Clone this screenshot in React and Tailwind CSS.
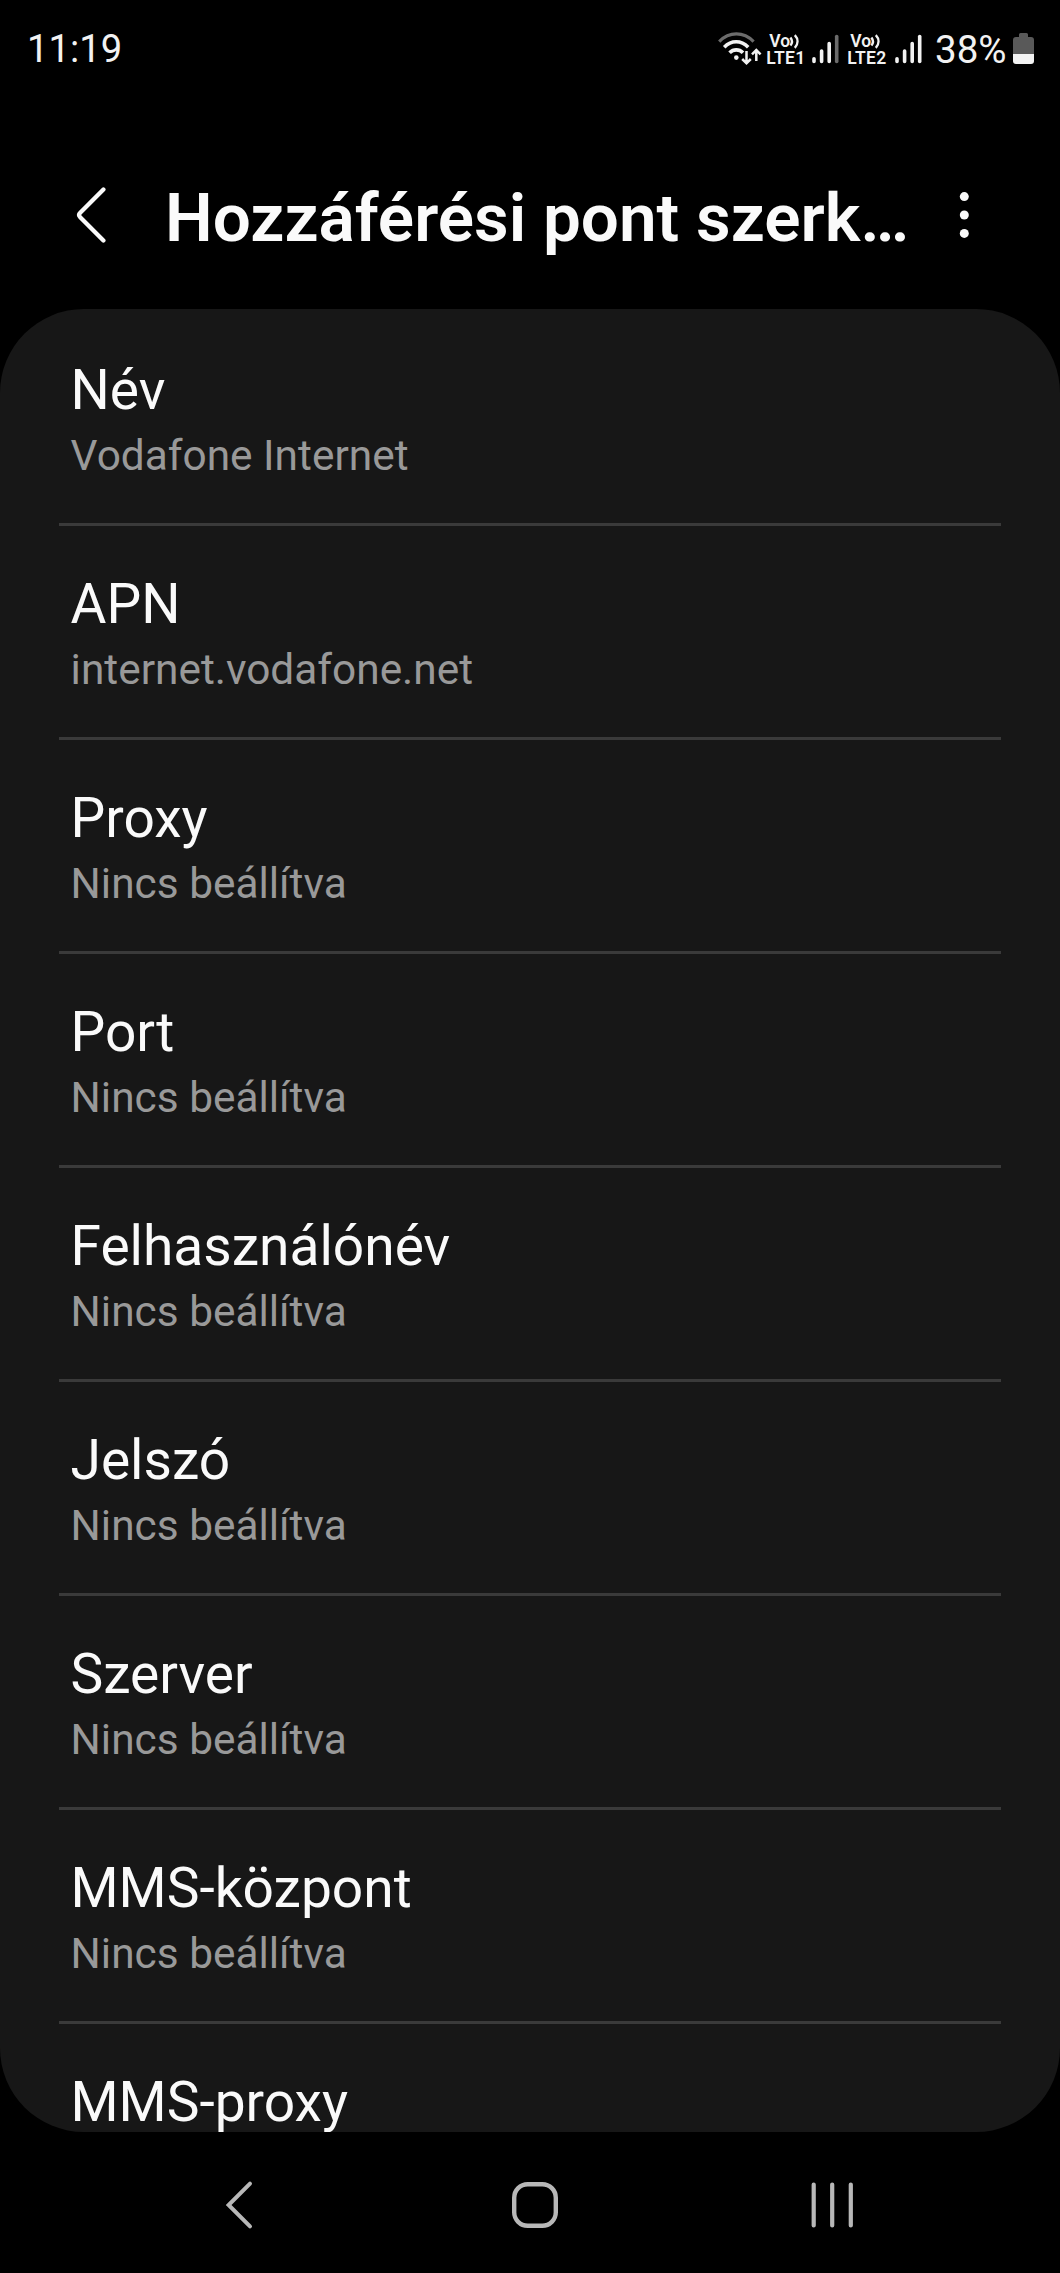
const UNSET = "Nincs beállítva";

const ITEMS = [
  { title: "Név", value: "Vodafone Internet" },
  { title: "APN", value: "internet.vodafone.net" },
  { title: "Proxy", value: UNSET },
  { title: "Port", value: UNSET },
  { title: "Felhasználónév", value: UNSET },
  { title: "Jelszó", value: UNSET },
  { title: "Szerver", value: UNSET },
  { title: "MMS-központ", value: UNSET },
  { title: "MMS-proxy" },
];

function WifiIcon() {
  return (
    <svg className="-mt-[2px] h-[34px] w-[44px]" viewBox="0 0 44 34" fill="none" strokeLinecap="butt">
      <path d="M1.2 9.6C11.3 -.6 25.5 -.6 35.6 9.6" stroke="#6b6b6b" strokeWidth="3.2" />
      <path d="M6.2 15.2C13.4 8 23 8 30.2 15.2" stroke="#f2f2f2" strokeWidth="3.6" />
      <path d="M11.6 20.8C15.4 16.9 21.2 16.9 25 20.8" stroke="#f2f2f2" strokeWidth="3.6" />
      <circle cx="18.3" cy="25.6" r="2.3" fill="#f2f2f2" />
      <path d="M28.5 19v12M24.2 27l4.3 4.3 4.3-4.3M38.3 29V18.3M34 22.4l4.3-4.3 4.3 4.3" stroke="#f2f2f2" strokeWidth="2.5" />
    </svg>
  );
}

function VolteBadge({ sim }) {
  return (
    <div className="flex h-[34px] w-[40px] flex-col text-[17.5px] font-semibold leading-[17px]">
      <div className="flex pl-[3px]">
        <span>Vo</span>
        <svg className="-ml-px h-[17px] w-[12px]" viewBox="0 0 12 17" fill="none" stroke="#f2f2f2" strokeWidth="2.4">
          <path d="M1.4 4.4c2 2.6 2 5.6 0 8.2M5.8 2.2c3.6 3.8 3.6 8.8 0 12.6" />
        </svg>
      </div>
      <span className="tracking-[0.3px]">LTE{sim}</span>
    </div>
  );
}

function SignalIcon({ weak }) {
  return (
    <svg className="-mt-[2px] h-[30px] w-[27px]" viewBox="0 0 27 30" stroke="#f2f2f2" strokeWidth="3.6" strokeLinecap="round">
      <path d="M2 24.8v2.6M9.6 17v10.4M17.2 9.6v17.8" />
      <path d="M24.7 2.6v24.8" stroke={weak ? "#6b6b6b" : "#f2f2f2"} />
    </svg>
  );
}

function BatteryIcon() {
  return (
    <svg className="h-[31px] w-[21px]" viewBox="0 0 21 31">
      <path d="M6 1.5Q6 0 7.5 0h6Q15 0 15 1.5V4h3q3 0 3 3v14H0V7q0-3 3-3h3z" fill="#595959" />
      <path d="M0 21h21v7q0 3-3 3H3q-3 0-3-3z" fill="#f2f2f2" />
    </svg>
  );
}

function StatusBar() {
  return (
    <div className="flex h-[97px] items-center justify-between pl-[27px] pr-[26px] text-[38.5px] leading-[46px] text-[#f2f2f2]">
      <span className="text-[38.2px]">11:19</span>
      <div className="flex items-center">
        <div className="mt-[2px] flex items-center">
          <WifiIcon />
          <div className="ml-[4.5px]"><VolteBadge sim="1" /></div>
          <div className="ml-[6px] flex"><SignalIcon weak /></div>
          <div className="ml-[8px]"><VolteBadge sim="2" /></div>
          <div className="ml-[7.7px] flex"><SignalIcon /></div>
        </div>
        <span className="ml-[13px] mt-[2px] w-[72px]">38%</span>
        <div className="ml-[6px] flex"><BatteryIcon /></div>
      </div>
    </div>
  );
}

function Header() {
  return (
    <header className="mt-[30px] flex h-[182px] items-center pl-[75px]">
      <button className="-mt-[6px] w-[90px]" aria-label="Vissza">
        <svg className="h-[56px] w-[32px]" viewBox="0 0 32 56" fill="none" stroke="#fafafa" strokeWidth="4.3" strokeLinecap="round">
          <path d="M28.4 2.6 5.2 25.8q-2.2 2.2 0 4.4L28.4 53.4" />
        </svg>
      </button>
      <h1 className="w-[762px] whitespace-nowrap text-[67.4px] font-semibold leading-[80px] text-[#fafafa]">Hozzáférési pont szerk…</h1>
      <button className="-mt-[6px] ml-[32px]" aria-label="További beállítások">
        <svg className="h-[50px] w-[10px]" viewBox="0 0 10 50" fill="#fafafa">
          <circle cx="5.3" cy="6.6" r="4.5" />
          <circle cx="5.3" cy="25" r="4.5" />
          <circle cx="5.3" cy="43.4" r="4.5" />
        </svg>
      </button>
    </header>
  );
}

function SettingRow({ title, value }) {
  return (
    <li className="h-[214px] shrink-0 border-t-[3px] border-[#3a3a3a] pt-[46px] first:border-transparent">
      <div className="pl-[11.5px] text-[55.1px] leading-[64px] text-[#fafafa]">{title}</div>
      {value && <div className="mt-[9px] pl-[11.6px] text-[42.4px] leading-[50px] text-[#999999]">{value}</div>}
    </li>
  );
}

function NavigationBar() {
  return (
    <nav className="flex h-[141px] items-center pl-[224px] pt-[5px]">
      <svg className="h-[50px] w-[30px]" viewBox="0 0 30 50" fill="none" stroke="#b8b8b8" strokeWidth="4" strokeLinecap="round">
        <path d="M26 3.6 4.6 25 26 46.4" />
      </svg>
      <svg className="ml-[258px] h-[46px] w-[46px]" viewBox="0 0 46 46" fill="none" stroke="#b8b8b8" strokeWidth="4.4">
        <rect x="2.2" y="2.2" width="41.6" height="41.6" rx="13.5" />
      </svg>
      <svg className="ml-[252px] h-[46px] w-[44px]" viewBox="0 0 44 46" stroke="#b8b8b8" strokeWidth="4.2" strokeLinecap="round">
        <path d="M3.7 2.6v40.8M22.2 2.6v40.8M40.8 2.6v40.8" />
      </svg>
    </nav>
  );
}

export default function App() {
  return (
    <div className="flex h-[2273px] w-[1060px] flex-col overflow-hidden bg-black font-['Roboto',sans-serif]">
      <StatusBar />
      <Header />
      <main className="h-[1823px] overflow-hidden rounded-[84px] bg-[#171717]">
        <ul className="mx-[59px] flex flex-col">
          {ITEMS.map((item) => (
            <SettingRow key={item.title} {...item} />
          ))}
        </ul>
      </main>
      <NavigationBar />
    </div>
  );
}
